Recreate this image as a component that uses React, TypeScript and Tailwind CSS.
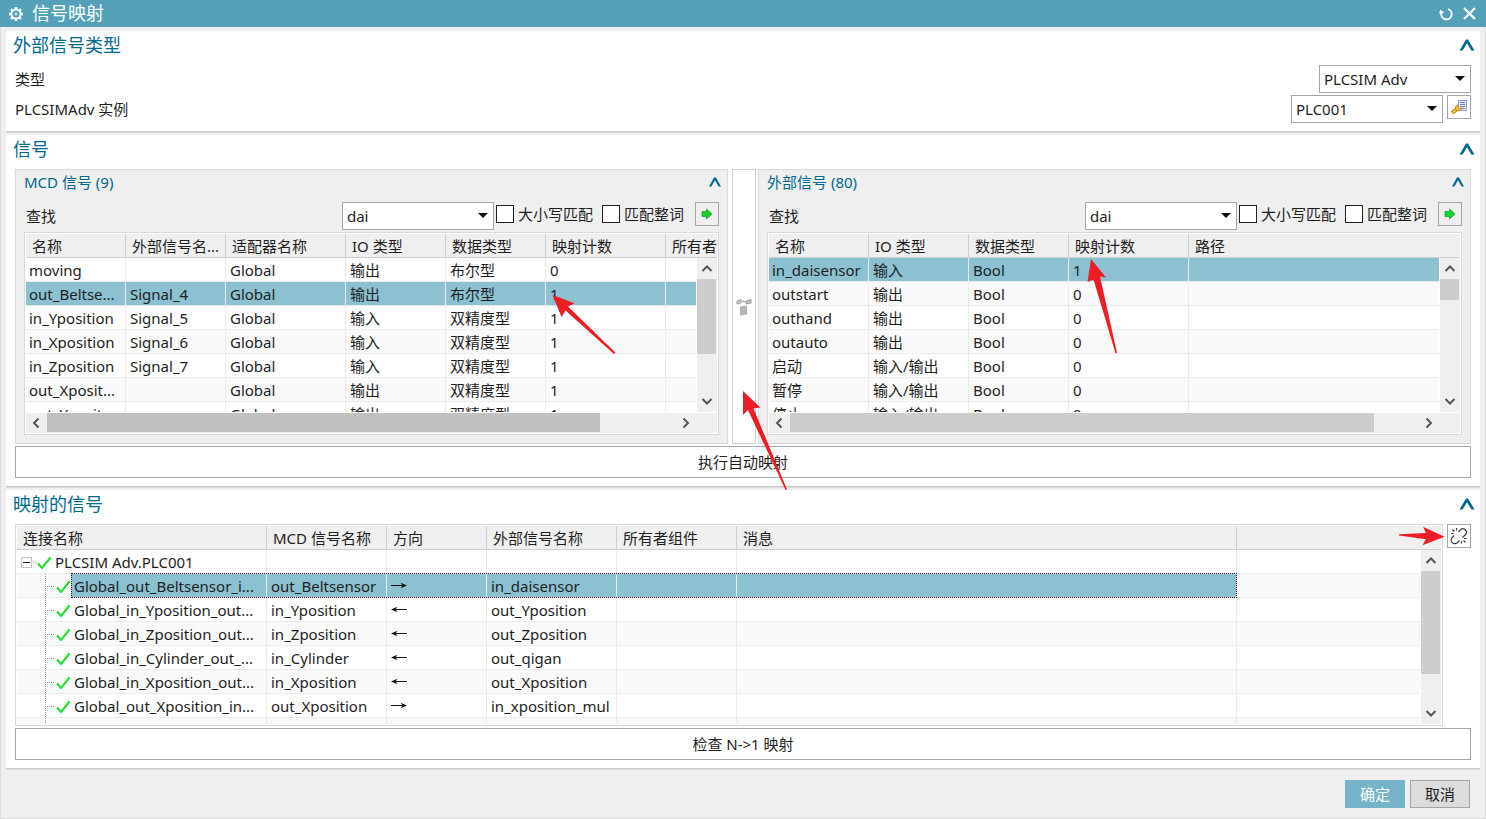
import { ReactNode, useState } from 'react';

type Column = { title: string; width?: number };

type Row = { cells: string[]; selected?: boolean };

type Mapping = {
  name: string;
  mcd: string;
  dir: 'left' | 'right';
  external: string;
  selected?: boolean;
};

const mcdColumns: Column[] = [
  { title: '名称', width: 100 },
  { title: '外部信号名...', width: 100 },
  { title: '适配器名称', width: 120 },
  { title: 'IO 类型', width: 100 },
  { title: '数据类型', width: 100 },
  { title: '映射计数', width: 120 },
  { title: '所有者' },
];

const mcdRows: Row[] = [
  { cells: ['moving', '', 'Global', '输出', '布尔型', '0', ''] },
  { cells: ['out_Beltse...', 'Signal_4', 'Global', '输出', '布尔型', '1', ''], selected: true },
  { cells: ['in_Yposition', 'Signal_5', 'Global', '输入', '双精度型', '1', ''] },
  { cells: ['in_Xposition', 'Signal_6', 'Global', '输入', '双精度型', '1', ''] },
  { cells: ['in_Zposition', 'Signal_7', 'Global', '输入', '双精度型', '1', ''] },
  { cells: ['out_Xposit...', '', 'Global', '输出', '双精度型', '1', ''] },
  { cells: ['out_Yposit...', '', 'Global', '输出', '双精度型', '1', ''] },
];

const externalColumns: Column[] = [
  { title: '名称', width: 100 },
  { title: 'IO 类型', width: 100 },
  { title: '数据类型', width: 100 },
  { title: '映射计数', width: 120 },
  { title: '路径' },
];

const externalRows: Row[] = [
  { cells: ['in_daisensor', '输入', 'Bool', '1', ''], selected: true },
  { cells: ['outstart', '输出', 'Bool', '0', ''] },
  { cells: ['outhand', '输出', 'Bool', '0', ''] },
  { cells: ['outauto', '输出', 'Bool', '0', ''] },
  { cells: ['启动', '输入/输出', 'Bool', '0', ''] },
  { cells: ['暂停', '输入/输出', 'Bool', '0', ''] },
  { cells: ['停止', '输入/输出', 'Bool', '0', ''] },
];

const mappedColumns: Column[] = [
  { title: '连接名称', width: 250 },
  { title: 'MCD 信号名称', width: 120 },
  { title: '方向', width: 100 },
  { title: '外部信号名称', width: 130 },
  { title: '所有者组件', width: 120 },
  { title: '消息', width: 500 },
  { title: '' },
];

const mappings: Mapping[] = [
  { name: 'Global_out_Beltsensor_i...', mcd: 'out_Beltsensor', dir: 'right', external: 'in_daisensor', selected: true },
  { name: 'Global_in_Yposition_out...', mcd: 'in_Yposition', dir: 'left', external: 'out_Yposition' },
  { name: 'Global_in_Zposition_out...', mcd: 'in_Zposition', dir: 'left', external: 'out_Zposition' },
  { name: 'Global_in_Cylinder_out_...', mcd: 'in_Cylinder', dir: 'left', external: 'out_qigan' },
  { name: 'Global_in_Xposition_out...', mcd: 'in_Xposition', dir: 'left', external: 'out_Xposition' },
  { name: 'Global_out_Xposition_in...', mcd: 'out_Xposition', dir: 'right', external: 'in_xposition_mul' },
];

const cellClass =
  'h-6 p-0 pt-0.5 pl-1 first:pl-[3px] border-b border-r border-[#ebebeb] overflow-hidden whitespace-nowrap';
const treeCellClass = 'h-6 p-0 border-b border-r border-[#ebebeb] overflow-hidden whitespace-nowrap';

function Collapse({ small }: { small?: boolean }) {
  return (
    <button type="button" aria-label="收起">
      {small ? (
        <svg width="14" height="10" viewBox="0 0 14 10" fill="#00698c">
          <path d="M1 9.5 L6 0.5 H8 L13 9.5 H10.6 L7 3.2 L3.4 9.5 Z" />
        </svg>
      ) : (
        <svg width="16" height="12" viewBox="0 0 16 12" fill="#00698c">
          <path d="M0.5 11.5 L7 0.5 H9 L15.5 11.5 H12.4 L8 4.2 L3.6 11.5 Z" />
        </svg>
      )}
    </button>
  );
}

function Section({ title, children }: { title: string; children: ReactNode }) {
  return (
    <section className="bg-white border-b border-[#c8c8c8] shadow-[0_1px_0_#dcdcdc] pb-2">
      <div className="h-7 mb-1.5 pl-[7px] pr-[5px] flex items-center justify-between">
        <h2 className="text-lg leading-7 text-[#00698c]">{title}</h2>
        <Collapse />
      </div>
      <div className="px-[9px]">{children}</div>
    </section>
  );
}

function Dropdown({ id, value }: { id: string; value: string }) {
  return (
    <div className="relative w-[152px] h-7">
      <select
        id={id}
        defaultValue={value}
        className="appearance-none w-full h-full bg-white border border-[#a5a5a5] pl-1 pr-6 outline-none"
      >
        <option>{value}</option>
      </select>
      <svg className="absolute right-1.5 top-[11px] pointer-events-none" width="10" height="5" viewBox="0 0 10 5">
        <path d="M0 0 H10 L5 5 Z" fill="#111" />
      </svg>
    </div>
  );
}

function Arrow({ dir }: { dir: 'up' | 'down' | 'left' | 'right' }) {
  const paths = {
    up: 'M1.5 8 L6 3.5 L10.5 8',
    down: 'M1.5 4 L6 8.5 L10.5 4',
    left: 'M7.5 1.5 L3 6 L7.5 10.5',
    right: 'M4.5 1.5 L9 6 L4.5 10.5',
  };
  return (
    <svg width="12" height="12" viewBox="0 0 12 12" fill="none" stroke="#555" strokeWidth="2">
      <path d={paths[dir]} />
    </svg>
  );
}

function VScroll({ size }: { size: number }) {
  return (
    <div className="absolute right-0 top-6 bottom-0 w-[21px] flex flex-col bg-[#efefef] border-l border-white">
      <button type="button" aria-label="向上滚动" className="h-[21px] pr-px flex items-center justify-center">
        <Arrow dir="up" />
      </button>
      <div className="flex-1">
        <div className="bg-[#cdcdcd] mr-px" style={{ height: `${size}%` }} />
      </div>
      <button type="button" aria-label="向下滚动" className="h-[21px] pr-px pb-0.5 flex items-center justify-center">
        <Arrow dir="down" />
      </button>
    </div>
  );
}

function HScroll({ size, color }: { size: number; color: string }) {
  return (
    <div className="h-[21px] flex bg-[#efefef] border-t border-white pr-[21px]">
      <button type="button" aria-label="向左滚动" className="w-[21px] pb-px flex items-center justify-center">
        <Arrow dir="left" />
      </button>
      <div className="flex-1">
        <div className="h-[19px]" style={{ width: `${size}%`, background: color }} />
      </div>
      <button type="button" aria-label="向右滚动" className="w-[21px] pr-0.5 pb-px flex items-center justify-center">
        <Arrow dir="right" />
      </button>
    </div>
  );
}

function Grid({ columns, children }: { columns: Column[]; children: ReactNode }) {
  return (
    <table className="w-full table-fixed border-separate border-spacing-0 leading-[21px]">
      <colgroup>
        {columns.map((c, i) => (
          <col key={i} style={{ width: c.width }} />
        ))}
      </colgroup>
      <thead>
        <tr>
          {columns.map((c, i) => (
            <th
              key={i}
              className="h-6 p-0 pt-0.5 pl-1.5 bg-[#efefef] border-b border-r border-[#cfcfcf] last:border-r-0 text-left font-normal overflow-hidden whitespace-nowrap"
            >
              {c.title}
            </th>
          ))}
        </tr>
      </thead>
      <tbody>{children}</tbody>
    </table>
  );
}

type PanelProps = {
  id: string;
  title: string;
  columns: Column[];
  rows: Row[];
  vSize: number;
  hSize: number;
  hColor: string;
};

function SignalPanel({ id, title, columns, rows, vSize, hSize, hColor }: PanelProps) {
  const [matchCase, setMatchCase] = useState(false);
  const [wholeWord, setWholeWord] = useState(false);
  const boxClass = 'appearance-none size-[18px] bg-white border border-[#222] checked:bg-[#00698c]';

  return (
    <div className="flex-1 min-w-0 bg-[#efefef] border border-[#d9d9d9] pb-2">
      <div className="h-6 mb-2 pl-2 pr-[5px] flex items-center justify-between">
        <h3 className="text-[#00698c]">{title}</h3>
        <Collapse small />
      </div>

      <div className="flex items-start mb-0.5 px-2">
        <label htmlFor={`${id}-find`} className="flex-1 leading-7 pl-0.5">
          查找
        </label>
        <Dropdown id={`${id}-find`} value="dai" />
        <label className="h-6 ml-0.5 flex items-center gap-1 whitespace-nowrap">
          <input
            type="checkbox"
            className={boxClass}
            checked={matchCase}
            onChange={e => setMatchCase(e.target.checked)}
          />
          大小写匹配
        </label>
        <label className="h-6 ml-[9px] flex items-center gap-1 whitespace-nowrap">
          <input
            type="checkbox"
            className={boxClass}
            checked={wholeWord}
            onChange={e => setWholeWord(e.target.checked)}
          />
          匹配整词
        </label>
        <button
          type="button"
          aria-label="查找下一个"
          className="size-6 ml-[11px] border border-[#a5a5a5] flex items-center justify-center"
        >
          <svg width="12" height="12" viewBox="0 0 12 12">
            <path d="M1 3.5 H5.5 V1 L11 6 L5.5 11 V8.5 H1 Z" fill="#12d22c" stroke="#0d9a22" strokeWidth="0.7" />
          </svg>
        </button>
      </div>

      <div className="mx-2 bg-white border border-[#d9d9d9] p-px">
        <div className="relative h-[178px] overflow-hidden">
          <Grid columns={columns}>
            {rows.map((row, i) => (
              <tr key={i} className={row.selected ? 'bg-[#8bc1d1]' : i % 2 ? 'bg-[#fafafa]' : 'bg-white'}>
                {row.cells.map((cell, j) => (
                  <td key={j} className={cellClass}>
                    {cell}
                  </td>
                ))}
              </tr>
            ))}
          </Grid>
          <VScroll size={vSize} />
        </div>
        <HScroll size={hSize} color={hColor} />
      </div>
    </div>
  );
}

const checkPath = 'M1 7.5 L5 12 L13.5 1.5';

function TreeRoot() {
  return (
    <svg className="shrink-0" width="36" height="23" viewBox="0 0 36 23" fill="none">
      <rect x="4.5" y="7.5" width="10" height="10" fill="#fff" stroke="#c4c4c4" />
      <path d="M6 12.5 H13" stroke="#111" />
      <path d="M16 12.5 H20" stroke="#999" strokeDasharray="1 1" />
      <path d={checkPath} transform="translate(20 6)" stroke="#1fdb2b" strokeWidth="2" />
    </svg>
  );
}

function TreeBranch() {
  return (
    <svg className="shrink-0" width="54" height="24" viewBox="0 0 54 24" fill="none">
      <path d="M28.5 0 V24" stroke="#999" strokeDasharray="1 1" />
      <path d="M30 12.5 H38" stroke="#999" strokeDasharray="1 1" />
      <path d={checkPath} transform="translate(39 6)" stroke="#1fdb2b" strokeWidth="2" />
    </svg>
  );
}

function Direction({ dir }: { dir: 'left' | 'right' }) {
  return (
    <svg
      role="img"
      aria-label={dir}
      className={dir === 'left' ? 'mb-0.5 rotate-180' : 'mb-0.5'}
      width="16"
      height="7"
      viewBox="0 0 16 7"
    >
      <path d="M0 3.5 H14" stroke="#111" fill="none" />
      <path d="M9.5 0.8 L16 3.5 L9.5 6.2 L11.5 3.5 Z" fill="#111" />
    </svg>
  );
}

function MappedTable() {
  return (
    <div className="flex-1 min-w-0 bg-white border border-[#d9d9d9] p-px">
      <div className="relative h-[198px] overflow-hidden">
        <Grid columns={mappedColumns}>
          <tr>
            <td className={treeCellClass}>
              <div className="flex h-[23px] gap-0.5">
                <TreeRoot />
                <span className="pt-0.5">PLCSIM Adv.PLC001</span>
              </div>
            </td>
            {mappedColumns.slice(1).map((c, i) => (
              <td key={i} className={cellClass}></td>
            ))}
          </tr>
          {mappings.map((m, i) => {
            const fill = m.selected ? ' bg-[#8bc1d1]' : '';
            return (
              <tr key={m.name} className={i % 2 ? 'relative bg-white' : 'relative bg-[#fafafa]'}>
                <td className={treeCellClass}>
                  <div className="flex h-[23px]">
                    <TreeBranch />
                    <span className={'flex-1 pt-0.5 pl-[3px]' + fill}>{m.name}</span>
                  </div>
                  {m.selected && (
                    <span className="absolute left-[54px] -top-px w-[1166px] h-[25px] border border-dotted border-[#3a1020]" />
                  )}
                </td>
                <td className={cellClass + fill}>{m.mcd}</td>
                <td className={cellClass + fill}>
                  <div className="h-[21px] flex items-center">
                    <Direction dir={m.dir} />
                  </div>
                </td>
                <td className={cellClass + fill}>{m.external}</td>
                <td className={cellClass + fill}></td>
                <td className={cellClass + fill}></td>
                <td className={cellClass}></td>
              </tr>
            );
          })}
          {/* next row, cut off by the viewport */}
          <tr className="bg-[#fafafa]">
            <td className={treeCellClass}>
              <svg className="block" width="54" height="23" viewBox="0 0 54 23">
                <path d="M28.5 0 V23" stroke="#999" strokeDasharray="1 1" />
              </svg>
            </td>
            {mappedColumns.slice(1).map((c, i) => (
              <td key={i} className={cellClass}></td>
            ))}
          </tr>
        </Grid>
        <VScroll size={78} />
      </div>
    </div>
  );
}

// red pointers drawn on top of the dialog
function Pointers() {
  return (
    <svg className="absolute inset-0 w-full h-full pointer-events-none" fill="#ee1c24">
      <path d="M552.5 295 L574.5 303.3 L568 306.5 L615.3 352.5 L614 354 L565.5 310.5 L561.5 317 Z" />
      <path d="M1091 259 L1106 277.5 L1100 276.5 L1117 353 L1115.6 353.5 L1093.5 279.5 L1087.5 282 Z" />
      <path d="M743 391 L760.3 407.5 L753.5 408.5 L787 489.5 L785.6 490 L748 410 L743 415 Z" />
      <path d="M1444.5 536.7 L1423 526.7 L1426 533 L1399 534.2 L1399 535.6 L1426 539.2 L1422.5 545.3 Z" />
    </svg>
  );
}

export default function App() {
  return (
    <div className="relative min-h-screen flex flex-col overflow-hidden bg-[#efefef] text-[15px] leading-6 text-[#1e1e1e] font-['Noto_Sans','Noto_Sans_CJK_SC',sans-serif]">
      {/* TITLE BAR */}
      <header className="h-[27px] bg-[#54a0b9] text-white flex items-center pl-2 pr-2.5">
        <svg width="16" height="16" viewBox="0 0 16 16" fill="none" stroke="#fff">
          <circle cx="8" cy="8" r="4.6" strokeWidth="2" />
          <circle cx="8" cy="8" r="1" strokeWidth="1" />
          <path
            d="M8 1 V3 M8 13 V15 M1 8 H3 M13 8 H15 M3 3 L4.5 4.5 M11.5 11.5 L13 13 M13 3 L11.5 4.5 M4.5 11.5 L3 13"
            strokeWidth="2.4"
          />
        </svg>
        <h1 className="ml-2 flex-1 text-lg leading-[27px]">信号映射</h1>
        <button type="button" aria-label="重置">
          <svg width="14" height="14" viewBox="0 0 14 14" fill="none" stroke="#fff" strokeWidth="1.9">
            <path d="M9 2.2 A5.2 5.2 0 1 1 2.4 6" />
            <path d="M0 6.5 L1.2 2.8 L5.4 5.4 Z" fill="#fff" stroke="none" />
          </svg>
        </button>
        <button type="button" aria-label="关闭" className="ml-2.5">
          <svg width="13" height="13" viewBox="0 0 13 13" stroke="#fff" strokeWidth="2.2">
            <path d="M1 1 L12 12 M12 1 L1 12" />
          </svg>
        </button>
      </header>

      <main className="flex-1 border border-t-0 border-[#dcdcdc] px-[5px] pt-1">
        <div className="flex flex-col gap-[3px]">
          <Section title="外部信号类型">
            <div className="flex justify-between mb-0.5">
              <label htmlFor="type" className="leading-7">
                类型
              </label>
              <Dropdown id="type" value="PLCSIM Adv" />
            </div>
            <div className="flex items-start">
              <label htmlFor="instance" className="flex-1 leading-7">
                PLCSIMAdv 实例
              </label>
              <Dropdown id="instance" value="PLC001" />
              <button
                type="button"
                aria-label="实例设置"
                className="size-6 ml-1 bg-white border border-[#a5a5a5] flex items-center justify-center"
              >
                <svg width="18" height="16" viewBox="0 0 18 16" fill="none">
                  <rect x="8.5" y="1.5" width="8" height="10" fill="#e8ecff" stroke="#8d95f7" />
                  <path d="M10 3.5 H15 M10 5.5 H15 M10 7.5 H15 M10 9.5 H15" stroke="#7b7f9c" />
                  <path d="M2 14 L7 10" stroke="#b47b12" strokeWidth="3.6" />
                  <path d="M2 14 L7 10" stroke="#f4d05a" strokeWidth="1.8" />
                  <path
                    d="M5.5 7.5 L8 5.5 V8 L9.5 9.5 L11.5 9 L10.5 11.5 L7.5 12 L5.5 10.5 Z"
                    fill="#f0c040"
                    stroke="#b47b12"
                    strokeWidth="0.7"
                  />
                </svg>
              </button>
            </div>
          </Section>

          <Section title="信号">
            <div className="flex">
              <SignalPanel
                id="mcd"
                title="MCD 信号 (9)"
                columns={mcdColumns}
                rows={mcdRows}
                vSize={67}
                hSize={88}
                hColor="#c1c1c1"
              />
              <button
                type="button"
                aria-label="映射信号"
                className="w-6 ml-1 mr-0.5 bg-white border border-[#d0d0d0] flex items-center justify-center"
              >
                <svg width="16" height="18" viewBox="0 0 16 18" fill="none">
                  <path d="M1 3 L5 1.5 V5 L1 6 Z" fill="#c9c9d4" stroke="#a2a2ae" />
                  <path d="M10 3 L15 1.5 V5 L10 6 Z" fill="#c4c4c4" stroke="#a2a2a2" />
                  <path d="M5.5 3.5 H9.5" stroke="#d08a8a" />
                  <path d="M4.5 9 L10.5 8 V16 L4.5 17 Z" fill="#b3b9bb" stroke="#a5adaf" />
                </svg>
              </button>
              <SignalPanel
                id="external"
                title="外部信号 (80)"
                columns={externalColumns}
                rows={externalRows}
                vSize={19}
                hSize={93}
                hColor="#cdcdcd"
              />
            </div>
            <button type="button" className="block w-full h-8 mt-0.5 bg-white border border-[#a5a5a5]">
              执行自动映射
            </button>
          </Section>

          <Section title="映射的信号">
            <div className="flex items-start gap-1">
              <MappedTable />
              <button
                type="button"
                aria-label="断开映射"
                className="size-6 bg-white border border-[#a5a5a5] flex items-center justify-center"
              >
                <svg width="18" height="18" viewBox="0 0 18 18" fill="none" stroke="#3c3c3c" strokeWidth="1.2">
                  <path d="M8.5 5 L10.5 2.8 A3.5 3.5 0 0 1 15.8 7.3 L12.5 10.5" />
                  <path d="M4 8.5 L2.3 10.5 A3.5 3.5 0 0 0 7.4 15.6 L9.5 13.5" />
                  <path d="M6.5 1 V3.5 M2.5 2.5 L4.5 4.5 M1 6.5 H3.5 M11.5 14 V16.5 M13.5 13.5 L15.5 15.5 M14 11.5 H16.5" />
                </svg>
              </button>
            </div>
            <button type="button" className="block w-full h-8 mt-0.5 bg-white border border-[#a5a5a5]">
              检查 N-&gt;1 映射
            </button>
          </Section>
        </div>

        {/* FOOTER */}
        <div className="flex justify-end gap-[5px] pt-[11px] pb-2.5 pr-2.5">
          <button type="button" className="w-[60px] h-7 bg-[#74b3c8] text-white">
            确定
          </button>
          <button type="button" className="w-[60px] h-7 bg-[#dcdcdc] border border-[#a5a5a5]">
            取消
          </button>
        </div>
      </main>

      <Pointers />
    </div>
  );
}
